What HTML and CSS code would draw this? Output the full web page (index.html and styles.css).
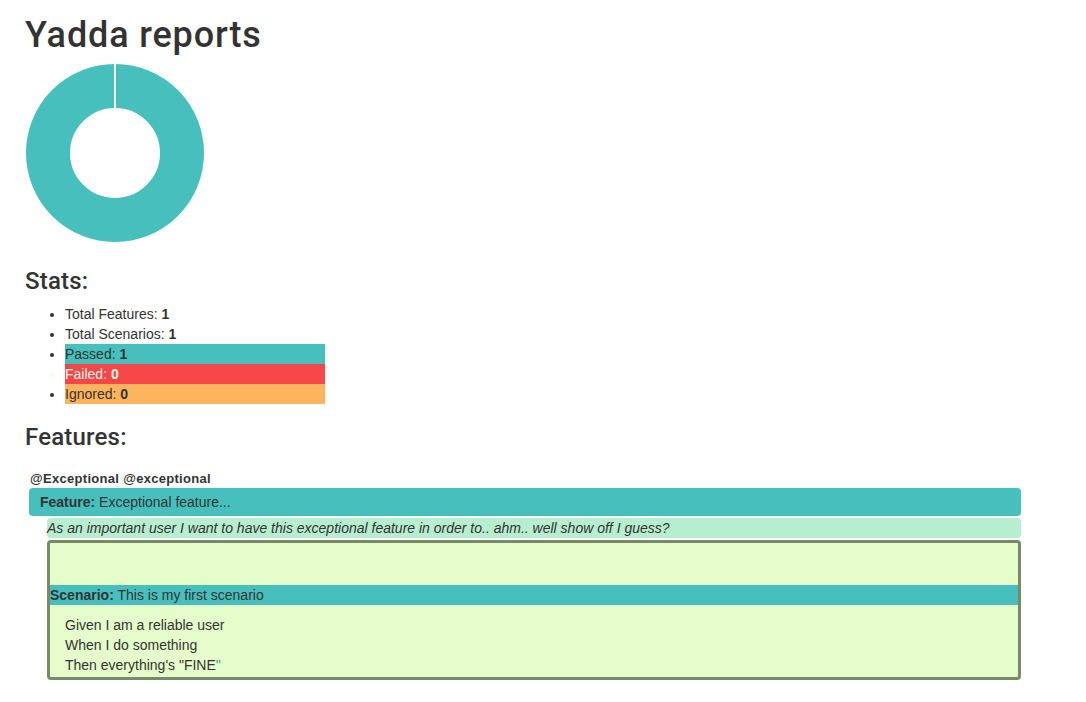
FILE: index.html
```html
<!DOCTYPE html>
<html>
<head>
<meta charset="utf-8">
<title>Yadda reports</title>
<link rel="stylesheet" href="styles.css">
</head>
<body>
<div class="page">
  <h1 class="title">Yadda reports</h1>
  <div class="chart">
    <svg width="178" height="178" viewBox="0 0 178 178">
      <circle cx="89" cy="89" r="67" fill="none" stroke="#46BFBD" stroke-width="44"/>
      <line x1="89" y1="0" x2="89" y2="45" stroke="#fff" stroke-width="2"/>
    </svg>
  </div>

  <h3 class="section">Stats:</h3>
  <ul class="stats">
    <li>Total Features: <b>1</b></li>
    <li>Total Scenarios: <b>1</b></li>
    <li class="stat passed">Passed: <b>1</b></li>
    <li class="stat failed">Failed: <b>0</b></li>
    <li class="stat ignored">Ignored: <b>0</b></li>
  </ul>

  <h3 class="section features-title">Features:</h3>
  <div class="feature">
    <div class="tags">@Exceptional @exceptional</div>
    <div class="feature-bar"><b>Feature:</b> Exceptional feature...</div>
    <div class="feature-body">
      <div class="narrative">As an important user I want to have this exceptional feature in order to.. ahm.. well show off I guess?</div>
      <div class="scenario">
        <div class="scenario-tags"></div>
        <div class="scenario-bar"><b>Scenario:</b> This is my first scenario</div>
        <ul class="steps">
          <li>Given I am a reliable user</li>
          <li>When I do something</li>
          <li>Then everything's "FINE<span class="quote">"</span></li>
        </ul>
      </div>
    </div>
  </div>
</div>
</body>
</html>
```

FILE: styles.css
```css
html, body {
  margin: 0;
  padding: 0;
  background: #fff;
}

body {
  font-family: "Liberation Sans", Arial, sans-serif;
  font-size: 14px;
  line-height: 20px;
  color: #333;
}

.page {
  padding: 0 25px;
}

.title {
  font-family: Roboto, "Liberation Sans", sans-serif;
  font-size: 36px;
  font-weight: 500;
  line-height: 1.1;
  margin: 16px 0 8px;
  letter-spacing: 0.85px;
}

.chart {
  display: flex;
  padding-left: 1px;
  height: 178px;
}

.chart svg {
  display: block;
}

.section {
  font-family: Roboto, "Liberation Sans", sans-serif;
  font-size: 24px;
  font-weight: 500;
  line-height: 1.1;
  margin: 26px 0 10px;
  letter-spacing: 0.2px;
}

.features-title {
  margin: 20px 0 20px;
}

.stats {
  margin: 0;
  padding-left: 40px;
}

.stats li {
  line-height: 20px;
}

.stats .stat {
  width: 260px;
}

.passed {
  background: #46BFBD;
}

.failed {
  background: #F7464A;
  color: #fff8e6;
}

.ignored {
  background: #FDB45C;
}

.feature {
  margin-left: 4px;
  width: 992px;
}

.tags {
  font-size: 13px;
  font-weight: bold;
  line-height: 18px;
  padding-left: 1px;
  letter-spacing: 0.3px;
}

.feature-bar {
  background: #46BFBD;
  border-radius: 4px;
  padding: 4px 11px;
  line-height: 20px;
}

.feature-body {
  margin-left: 18px;
}

.narrative {
  margin-top: 2px;
  background: #b7eecf;
  border-radius: 4px;
  font-style: italic;
  line-height: 20px;
}

.scenario {
  margin-top: 2px;
  background: #e5fdca;
  border: 3px solid #798a69;
  border-radius: 4px;
  padding-bottom: 2px;
}

.scenario-tags {
  height: 42px;
}

.scenario-bar {
  background: #46BFBD;
  line-height: 20px;
}

.steps {
  list-style: none;
  margin: 10px 0 0;
  padding-left: 15px;
}

.steps li {
  line-height: 20px;
}

.quote {
  color: #1f9fc4;
}
```
